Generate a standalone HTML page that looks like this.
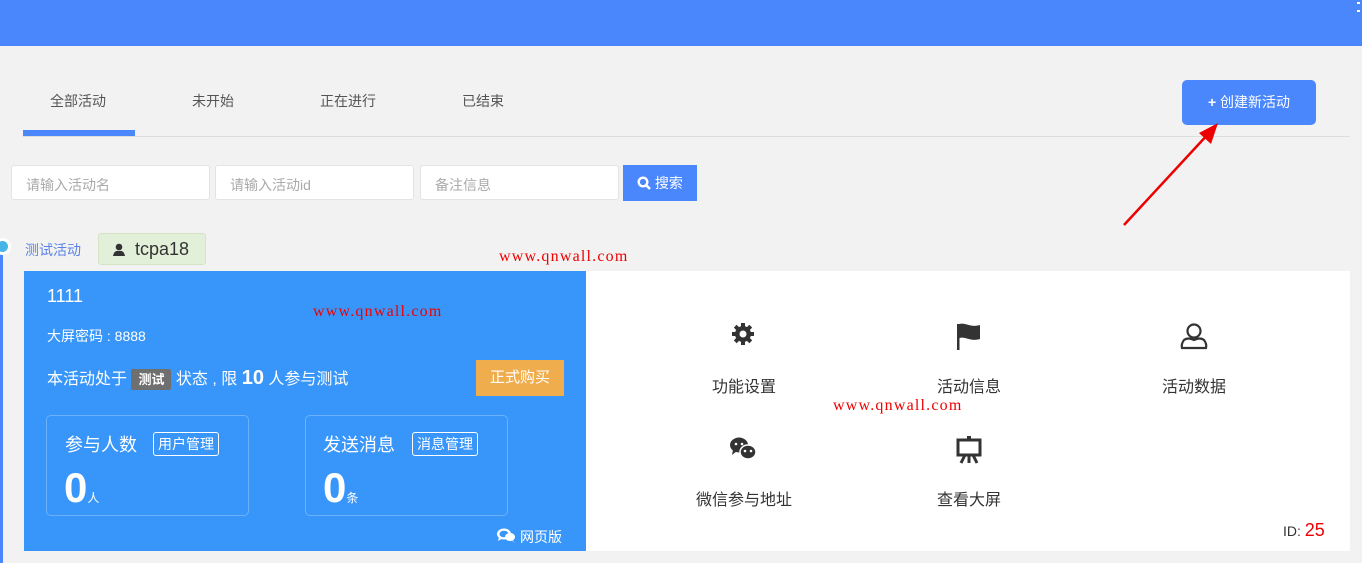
<!DOCTYPE html>
<html><head><meta charset="utf-8"><style>
*{margin:0;padding:0;box-sizing:border-box}
body{width:1362px;height:563px;overflow:hidden;background:#f2f2f2;font-family:"Liberation Sans","Noto Sans CJK SC",sans-serif;position:relative;color:#333}
.a{position:absolute}
.hdr{left:0;top:0;width:1362px;height:46px;background:#4a86fc}
.tab{top:91px;font-size:14px;color:#555}
.inp{top:165px;width:199px;height:35px;background:#fff;border:1px solid #e3e3e3;border-radius:3px;font-size:14px;color:#aaa;padding:9px 14px}
.wm{font-family:"Liberation Serif","Liberation Mono",monospace;color:#e00;font-size:16px;letter-spacing:1.2px}
.w{color:#fff}
.box{top:415px;width:203px;height:101px;border:1px solid #6bb2fc;border-radius:5px}
.tag{border:1px solid #fff;border-radius:3px;font-size:14px;padding:1px 4px;color:#fff}
.it{font-size:16px;color:#333;text-align:center;width:160px}
</style></head><body>
<div class="a hdr"></div>
<div class="a" style="left:1357px;top:2px;width:3px;height:10px;border-top:2px solid #fff;border-bottom:2px solid #fff"></div>
<div class="a tab" style="left:50px">全部活动</div>
<div class="a tab" style="left:192px">未开始</div>
<div class="a tab" style="left:320px">正在进行</div>
<div class="a tab" style="left:462px">已结束</div>
<div class="a" style="left:23px;top:130px;width:112px;height:6px;background:#4a86fc"></div>
<div class="a" style="left:23px;top:136px;width:1327px;height:1px;background:#ddd"></div>
<div class="a" style="left:1182px;top:80px;width:134px;height:45px;background:#4a86fc;border-radius:5px;color:#fff;font-size:14px;line-height:45px;text-align:center"><b>+</b> 创建新活动</div>
<svg class="a" style="left:1115px;top:115px" width="110" height="115"><line x1="9" y1="110" x2="95" y2="17" stroke="#e00" stroke-width="2.5"/><polygon points="103,8 84,18 96,29" fill="#e00"/></svg>
<div class="a inp" style="left:11px">请输入活动名</div>
<div class="a inp" style="left:215px">请输入活动id</div>
<div class="a inp" style="left:420px">备注信息</div>
<div class="a" style="left:623px;top:165px;width:74px;height:36px;background:#4a86fc;color:#fff;font-size:14px;line-height:36px;text-align:center"><svg width="14" height="14" style="vertical-align:-2px"><circle cx="6" cy="6" r="4.3" fill="none" stroke="#fff" stroke-width="2.4"/><line x1="9" y1="9" x2="13" y2="13" stroke="#fff" stroke-width="2.6"/></svg> 搜索</div>
<div class="a" style="left:0;top:250px;width:3px;height:313px;background:#4a86fc"></div>
<div class="a" style="left:-6px;top:238px;width:17px;height:17px;border-radius:50%;background:#46b4e6;border:3px solid #fff"></div>
<div class="a" style="left:25px;top:240px;font-size:14px;color:#5b82e8">测试活动</div>
<div class="a" style="left:98px;top:233px;width:108px;height:32px;background:#e3f0d9;border:1px solid #d3e5c5;border-radius:3px;font-size:18px;line-height:30px;color:#333;padding-left:14px"><svg width="12" height="13" style="vertical-align:-1px"><circle cx="6" cy="4" r="3.3" fill="#333"/><path d="M0 13 Q1 7 6 8 Q11 7 12 13Z" fill="#333"/></svg> &nbsp;tcpa18</div>
<div class="a wm" style="left:499px;top:248px">www.qnwall.com</div>
<div class="a" style="left:24px;top:271px;width:562px;height:280px;background:#3896fa"></div>
<div class="a" style="left:586px;top:271px;width:764px;height:280px;background:#fff"></div>
<div class="a w" style="left:47px;top:286px;font-size:18px">1111</div>
<div class="a wm" style="left:313px;top:303px">www.qnwall.com</div>
<div class="a w" style="left:47px;top:326px;font-size:14px">大屏密码 : 8888</div>
<div class="a w" style="left:47px;top:365px;font-size:16px">本活动处于 <span style="background:#6f6f6f;border-radius:2px;padding:3px 7px;font-size:13px;font-weight:bold">测试</span> 状态 , 限 <b style="font-size:20px">10</b> 人参与测试</div>
<div class="a w" style="left:476px;top:360px;width:88px;height:36px;background:#f0ad4e;font-size:15px;line-height:36px;text-align:center">正式购买</div>
<div class="a box" style="left:46px"></div>
<div class="a box" style="left:305px"></div>
<div class="a w" style="left:65px;top:431px;font-size:18px">参与人数</div>
<div class="a tag" style="left:153px;top:432px">用户管理</div>
<div class="a w" style="left:64px;top:464px;font-size:42px;font-weight:bold">0<span style="font-size:12px;font-weight:normal">人</span></div>
<div class="a w" style="left:323px;top:431px;font-size:18px">发送消息</div>
<div class="a tag" style="left:412px;top:432px">消息管理</div>
<div class="a w" style="left:323px;top:464px;font-size:42px;font-weight:bold">0<span style="font-size:12px;font-weight:normal">条</span></div>
<svg class="a" style="left:496px;top:527px" width="20" height="16"><ellipse cx="8" cy="7" rx="7" ry="5.5" fill="#fff"/><path d="M3 10 L2 14 L7 11Z" fill="#fff"/><ellipse cx="8" cy="7" rx="4.5" ry="3.3" fill="#3896fa"/><ellipse cx="14" cy="10" rx="5" ry="4" fill="#fff"/><path d="M16 13 L19 16 L15 13Z" fill="#fff"/></svg>
<div class="a w" style="left:520px;top:527px;font-size:14px">网页版</div>
<svg class="a" style="left:731px;top:322px" width="24" height="24" viewBox="0 0 24 24"><g fill="#333"><circle cx="12" cy="12" r="8"/><rect x="10" y="1" width="4" height="22"/><rect x="1" y="10" width="22" height="4"/><rect x="10" y="1" width="4" height="22" transform="rotate(45 12 12)"/><rect x="10" y="1" width="4" height="22" transform="rotate(-45 12 12)"/></g><circle cx="12" cy="12" r="3.5" fill="#fff"/></svg>
<svg class="a" style="left:956px;top:322px" width="26" height="28"><rect x="1" y="2" width="2.5" height="26" fill="#333"/><path d="M3 2 C10 0 14 6 24 3 V17 C14 20 10 14 3 16Z" fill="#333"/></svg>
<svg class="a" style="left:1179px;top:322px" width="30" height="30"><circle cx="15" cy="9" r="6.5" fill="none" stroke="#333" stroke-width="2.2"/><path d="M5 18 Q2 22 3 26 H27 Q28 22 25 18 Q21 15 15 18 Q9 15 5 18Z" fill="none" stroke="#333" stroke-width="2.2"/></svg>
<svg class="a" style="left:729px;top:437px" width="28" height="24"><ellipse cx="10" cy="8" rx="9" ry="7.5" fill="#333"/><path d="M4 13 L3 18 L8 14Z" fill="#333"/><ellipse cx="19" cy="15" rx="8" ry="7" fill="#333" stroke="#fff" stroke-width="1.5"/><circle cx="16" cy="14" r="1.3" fill="#fff"/><circle cx="22" cy="14" r="1.3" fill="#fff"/><circle cx="7" cy="7" r="1.3" fill="#fff"/><circle cx="13" cy="7" r="1.3" fill="#fff"/></svg>
<svg class="a" style="left:955px;top:436px" width="28" height="28"><rect x="3" y="4" width="22" height="15" fill="none" stroke="#333" stroke-width="3"/><rect x="12" y="0" width="4" height="5" fill="#333"/><path d="M10 19 L6 27 M18 19 L22 27 M14 19 V27" stroke="#333" stroke-width="3"/></svg>
<div class="a it" style="left:664px;top:373px">功能设置</div>
<div class="a it" style="left:889px;top:373px">活动信息</div>
<div class="a it" style="left:1114px;top:373px">活动数据</div>
<div class="a wm" style="left:833px;top:397px">www.qnwall.com</div>
<div class="a it" style="left:664px;top:486px">微信参与地址</div>
<div class="a it" style="left:889px;top:486px">查看大屏</div>
<div class="a" style="left:1283px;top:520px;font-size:14px;color:#333">ID: <span style="color:#e00;font-size:18px">25</span></div>
</body></html>
